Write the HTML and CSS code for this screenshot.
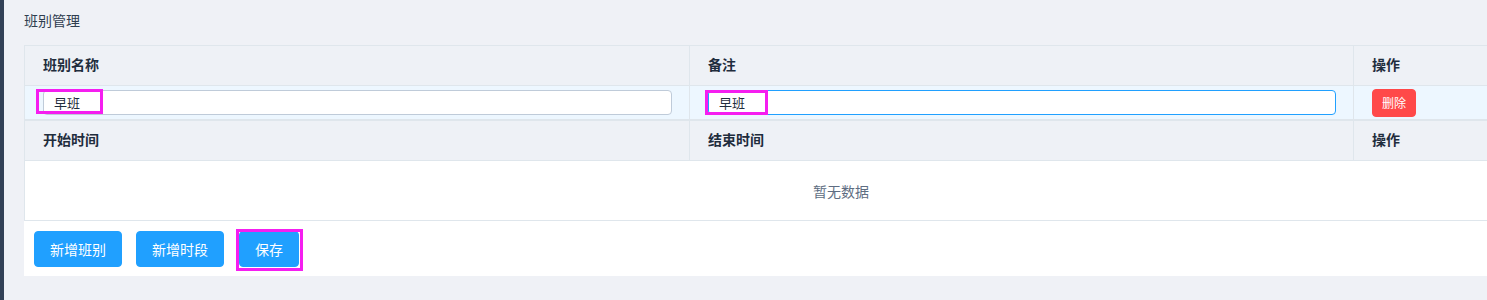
FILE: index.html
```html
<!DOCTYPE html>
<html lang="zh-CN">
<head>
<meta charset="utf-8">
<title>班别管理</title>
<link rel="stylesheet" href="styles.css">
</head>
<body>
<div class="layout">
  <aside class="sidebar"></aside>
  <main class="main">
    <div class="title">班别管理</div>
    <div class="panel">
      <div class="grid">
        <div class="th first">班别名称</div>
        <div class="th">备注</div>
        <div class="th">操作</div>

        <div class="td first current">
          <span class="field field-a"><input class="input" value="早班"><span class="mark mark-a"></span></span>
        </div>
        <div class="td current">
          <span class="field field-b"><input class="input focus" value="早班"><span class="mark mark-b"></span></span>
        </div>
        <div class="td current"><button class="btn-del">删除</button></div>

        <div class="th first sep">开始时间</div>
        <div class="th sep">结束时间</div>
        <div class="th sep">操作</div>

        <div class="empty">暂无数据</div>
      </div>
      <div class="footer">
        <button class="btn">新增班别</button>
        <button class="btn">新增时段</button>
        <span class="save-wrap"><button class="btn">保存</button><span class="mark mark-c"></span></span>
      </div>
    </div>
  </main>
</div>
</body>
</html>
```
FILE: styles.css
```css
html, body {
  margin: 0;
  padding: 0;
}
body {
  background: #eff1f6;
  font-family: "Noto Sans CJK SC", "Noto Sans", sans-serif;
  color: #1f2d3d;
  overflow: hidden;
  width: 1487px;
  height: 300px;
}
.layout {
  display: flex;
  height: 300px;
}
.sidebar {
  width: 4px;
  flex: none;
  background: #324157;
}
.main {
  padding-left: 20px;
  flex: none;
}
.title {
  height: 45px;
  line-height: 40px;
  font-size: 14px;
  color: #2f3d4f;
}
.panel {
  width: 1520px;
  background: #fff;
}
.grid {
  display: grid;
  grid-template-columns: 665px 664px 1fr;
  border-top: 1px solid #dfe6ec;
  border-left: 1px solid #dfe6ec;
}
.th, .td {
  border-right: 1px solid #dfe6ec;
  border-bottom: 1px solid #dfe6ec;
  padding-left: 18px;
  display: flex;
  align-items: center;
  box-sizing: border-box;
}
.th {
  height: 40px;
  padding-bottom: 3px;
  background: #eef1f6;
  font-size: 14px;
  font-weight: bold;
  color: #1f2d3d;
}
.th.sep {
  height: 41px;
  border-top: 1px solid #dfe6ec;
}
.td.current {
  height: 34px;
  background: #edf7ff;
}
.field {
  position: relative;
  display: block;
}
.field-a { width: 629px; }
.field-b { width: 628px; }
.input {
  display: block;
  box-sizing: border-box;
  width: 100%;
  height: 25px;
  border: 1px solid #bfcbd9;
  border-radius: 4px;
  padding: 0 10px;
  font-family: "Noto Sans CJK SC", "Noto Sans", sans-serif;
  font-size: 13px;
  color: #1f2d3d;
  background: #fff;
  outline: none;
}
.input.focus {
  border-color: #20a0ff;
}
.mark {
  position: absolute;
  border: 3px solid #f51ef0;
  box-sizing: border-box;
  pointer-events: none;
}
.mark-a {
  left: -7px;
  top: -1px;
  width: 67px;
  height: 25px;
}
.mark-b {
  left: -3px;
  top: 0px;
  width: 63px;
  height: 25px;
}
.btn-del {
  height: 28px;
  padding: 0 9px;
  border: 1px solid #ff4949;
  background: #ff4949;
  color: #fff;
  border-radius: 4px;
  font-family: "Noto Sans CJK SC", "Noto Sans", sans-serif;
  font-size: 12px;
}
.empty {
  grid-column: 1 / -1;
  height: 60px;
  display: flex;
  align-items: center;
  padding-left: 788px;
  box-sizing: border-box;
  border-bottom: 1px solid #dfe6ec;
  font-size: 14px;
  color: #5e6d82;
}
.footer {
  display: flex;
  align-items: center;
  gap: 14px;
  height: 55px;
  padding-left: 10px;
  box-sizing: border-box;
}
.btn {
  height: 36px;
  padding: 0 15px;
  border: 1px solid #20a0ff;
  background: #20a0ff;
  color: #fff;
  border-radius: 4px;
  font-family: "Noto Sans CJK SC", "Noto Sans", sans-serif;
  font-size: 14px;
  display: block;
}
.save-wrap {
  position: relative;
  display: block;
  margin-left: 1px;
}
.mark-c {
  left: -3px;
  top: -2px;
  width: 67px;
  height: 42px;
}
```
